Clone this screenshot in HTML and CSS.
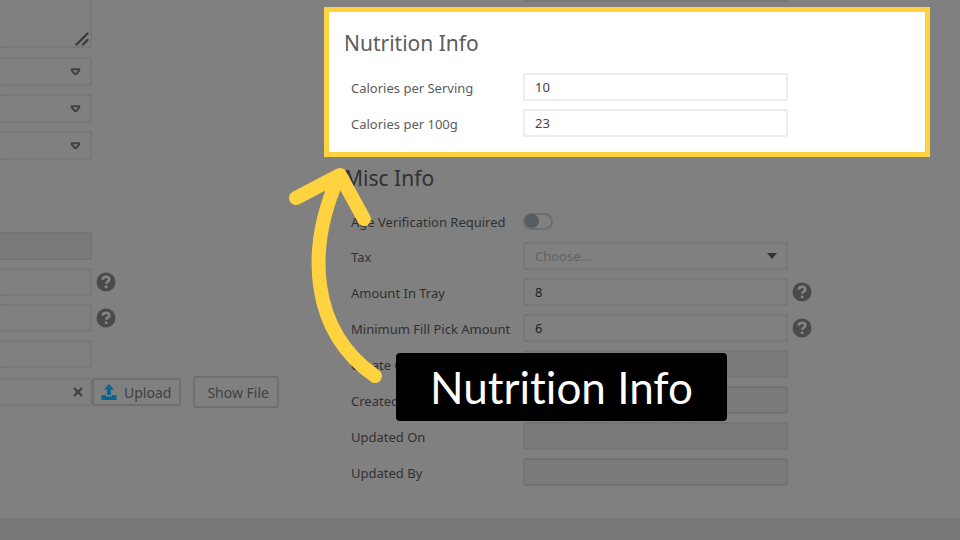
FILE: index.html
```html
<!DOCTYPE html>
<html lang="en">
<head>
    <meta charset="UTF-8">
    <meta name="viewport" content="width=device-width, initial-scale=1.0">
    <title>Nutrition Info</title>
    <link rel="stylesheet" href="styles.css">
</head>
<body>

<svg class="symbols" aria-hidden="true">
    <symbol id="help" viewBox="0 0 20 20">
        <circle cx="10" cy="10" r="9.5" fill="#4a4a4a"/>
        <path d="M6.7 7.6C6.900 5.600 8.200 4.700 10 4.700c1.900 0 3.300 1 3.300 2.700 0 2.300-3.100 2.200-3.100 4.400" fill="none" stroke="#858585" stroke-width="2.600"/>
        <circle cx="10.1" cy="14.8" r="1.5" fill="#858585"/>
    </symbol>
    <symbol id="chevron" viewBox="0 0 10 8">
        <path d="M1.2 1.2h7.6v1.2L5.8 6H4.2L1.2 2.4z" fill="none" stroke="#424242" stroke-width="2" stroke-linejoin="round"/>
    </symbol>
</svg>

<main class="page">
    <form class="side">
        <div class="field">
            <textarea class="notes" aria-label="Description"></textarea>
            <svg class="grip" viewBox="0 0 14 14"><path d="M1.5 12.5l11-11M8 12.5L12.5 8" stroke="#3a3a3a" stroke-width="2.4" stroke-linecap="round"/></svg>
        </div>
        <div class="pickers">
            <div class="field">
                <select class="input picker" aria-label="Category"></select>
                <svg class="chevron"><use href="#chevron"/></svg>
            </div>
            <div class="field">
                <select class="input picker" aria-label="Group"></select>
                <svg class="chevron"><use href="#chevron"/></svg>
            </div>
            <div class="field">
                <select class="input picker" aria-label="Type"></select>
                <svg class="chevron"><use href="#chevron"/></svg>
            </div>
        </div>
        <div class="rows">
            <div class="side-row"><input class="input" type="text" aria-label="Code" disabled></div>
            <div class="side-row">
                <input class="input" type="text" aria-label="Weight">
                <svg class="help"><use href="#help"/></svg>
            </div>
            <div class="side-row">
                <input class="input" type="text" aria-label="Volume">
                <svg class="help"><use href="#help"/></svg>
            </div>
            <div class="side-row"><input class="input" type="text" aria-label="Unit"></div>
            <div class="file-row">
                <div class="field">
                    <input class="input" type="text" aria-label="File">
                    <button class="clear" type="button" aria-label="Clear file">
                        <svg viewBox="0 0 10 10"><path d="M1 1l8 8M9 1L1 9" stroke="#404040" stroke-width="2.2"/></svg>
                    </button>
                </div>
                <button class="btn upload" type="button">
                    <svg class="upload-icon" viewBox="0 0 16 16"><path d="M8 0l5 5.500H10V11H6V5.500H3zM0.500 11h4.500v1.400h6V11h4.500v5H0.500z" fill="#0a6590"/></svg>
                    Upload
                </button>
                <button class="btn show" type="button">Show File</button>
            </div>
        </div>
    </form>

    <form class="details">
        <div class="section">
            <div class="row">
                <span></span>
                <input class="input" type="text" aria-label="Previous field">
            </div>
        </div>

        <section class="section highlight">
            <h2>Nutrition Info</h2>
            <div class="rows">
                <div class="row">
                    <label for="serving">Calories per Serving</label>
                    <input class="input" type="text" id="serving" value="10">
                </div>
                <div class="row">
                    <label for="per100">Calories per 100g</label>
                    <input class="input" type="text" id="per100" value="23">
                </div>
            </div>
        </section>

        <section class="section misc">
            <h2>Misc Info</h2>
            <div class="rows">
                <div class="row row-toggle">
                    <label for="age">Age Verification Required</label>
                    <input class="toggle" type="checkbox" id="age">
                </div>
                <div class="row">
                    <label for="tax">Tax</label>
                    <div class="field">
                        <select class="input choose" id="tax"><option>Choose...</option></select>
                        <svg class="caret" viewBox="0 0 10 6"><path d="M0 0h10L5 6z" fill="#333"/></svg>
                    </div>
                </div>
                <div class="row">
                    <label for="tray">Amount In Tray</label>
                    <input class="input" type="text" id="tray" value="8">
                    <svg class="help"><use href="#help"/></svg>
                </div>
                <div class="row">
                    <label for="fill">Minimum Fill Pick Amount</label>
                    <input class="input" type="text" id="fill" value="6">
                    <svg class="help"><use href="#help"/></svg>
                </div>
                <div class="row">
                    <label for="created-on">Create On</label>
                    <input class="input" type="text" id="created-on" disabled>
                </div>
                <div class="row">
                    <label for="created-by">Created By</label>
                    <input class="input" type="text" id="created-by" disabled>
                </div>
                <div class="row">
                    <label for="updated-on">Updated On</label>
                    <input class="input" type="text" id="updated-on" disabled>
                </div>
                <div class="row">
                    <label for="updated-by">Updated By</label>
                    <input class="input" type="text" id="updated-by" disabled>
                </div>
            </div>
        </section>
    </form>
</main>

<footer class="footer"></footer>

<svg class="arrow" viewBox="0 0 100 220" aria-hidden="true">
    <path d="M58 18C27 88 29 170 95 216M16 38L60 15L84 59"/>
</svg>
<div class="callout">Nutrition Info</div>

</body>
</html>
```

FILE: styles.css
```css
* {
    box-sizing: border-box;
}
body {
    position: relative;
    display: flex;
    flex-direction: column;
    min-height: 100vh;
    margin: 0;
    overflow: hidden;
    background: #808080;
    color: #303030;
    font-family: 'Noto Sans', sans-serif;
    font-size: 13px;
}
.symbols {
    position: absolute;
    width: 0;
    height: 0;
}
/* the form is scrolled a little, so its first row is cut by the top edge */
.page {
    display: grid;
    grid-template-columns: 324px 1fr;
    margin-top: -26px;
    padding: 0 30px 32px 0;
}
.footer {
    flex: 1;
    background: #777;
}

/* fields */
.input,
.notes {
    display: block;
    width: 100%;
    height: 28px;
    margin: 0;
    padding: 0 10px;
    border: 2px solid #787878;
    border-radius: 2px;
    background: transparent;
    color: #222;
    font: inherit;
    appearance: none;
}
.input:disabled {
    background: #7a7a7a;
    border-color: #747474;
}
.field {
    position: relative;
}
.rows {
    display: flex;
    flex-direction: column;
    gap: 8px;
}
.help {
    width: 20px;
    height: 20px;
}

/* left column */
.side .input,
.notes {
    width: 92px;
    border-left: 0;
}
.notes {
    height: 74px;
    resize: none;
}
.grip {
    position: absolute;
    left: 75px;
    bottom: 2px;
    width: 14px;
    height: 14px;
}
.pickers {
    display: flex;
    flex-direction: column;
    gap: 8px;
    margin: 9px 0 72px;
}
.side .picker {
    height: 29px;
}
.chevron {
    position: absolute;
    left: 70px;
    top: 11px;
    width: 11px;
    height: 8px;
}
.side-row {
    display: flex;
    align-items: center;
    gap: 4px;
}
.file-row {
    display: flex;
    align-items: center;
}
.clear {
    position: absolute;
    left: 68px;
    top: 4px;
    display: flex;
    align-items: center;
    justify-content: center;
    width: 20px;
    height: 20px;
    padding: 0;
    border: 0;
    background: none;
}
.clear svg {
    width: 10px;
    height: 10px;
}
.btn {
    display: flex;
    align-items: center;
    border: 2px solid #6f6f6f;
    border-radius: 2px;
    background: transparent;
    color: #404040;
    font: inherit;
    font-size: 14px;
    white-space: nowrap;
}
.upload {
    gap: 7px;
    height: 28px;
    padding: 0 8px 0 7px;
}
.upload-icon {
    width: 16px;
    height: 16px;
}
.show {
    height: 32px;
    margin-left: 12px;
    padding: 0 8px 0 12px;
}

/* right column */
.section {
    padding: 0 16px 0 20px;
}
.section h2 {
    margin: 0 0 16px;
    font-size: 21px;
    font-weight: 400;
    line-height: 28px;
}
.row {
    display: grid;
    grid-template-columns: 168px minmax(0, 265px) 20px;
    column-gap: 4px;
    align-items: center;
    padding-left: 7px;
}
.row label {
    padding-top: 1px;
    white-space: nowrap;
}
.row-toggle {
    height: 26px;
}
.highlight {
    margin-top: 5px;
    padding: 17px 11px 15px 15px;
    border: 5px solid #ffd23f;
    background: #fff;
    color: #5c5c5c;
}
.highlight .input {
    border-color: #ededed;
    color: #444;
}
.misc {
    margin-top: 7px;
}
.choose {
    color: #626262;
}
.caret {
    position: absolute;
    right: 11px;
    top: 11px;
    width: 10px;
    height: 6px;
}
.toggle {
    display: flex;
    align-items: center;
    width: 30px;
    height: 17px;
    margin: 0;
    border: 2px solid #6c6c6c;
    border-radius: 9px;
    appearance: none;
}
.toggle::before {
    content: '';
    width: 14px;
    height: 14px;
    border-radius: 50%;
    background: #575c60;
}

/* annotation over the form */
.arrow {
    position: absolute;
    left: 280px;
    top: 160px;
    width: 100px;
    height: 220px;
    overflow: visible;
    fill: none;
    stroke: #ffd23f;
    stroke-width: 14;
    stroke-linecap: round;
    stroke-linejoin: round;
}
.callout {
    position: absolute;
    left: 396px;
    top: 353px;
    padding: 0 34px;
    border-radius: 4px;
    background: #000;
    color: #fff;
    font-family: Lato, sans-serif;
    font-size: 44px;
    font-variant-ligatures: none;
    line-height: 68px;
    white-space: nowrap;
}
```
